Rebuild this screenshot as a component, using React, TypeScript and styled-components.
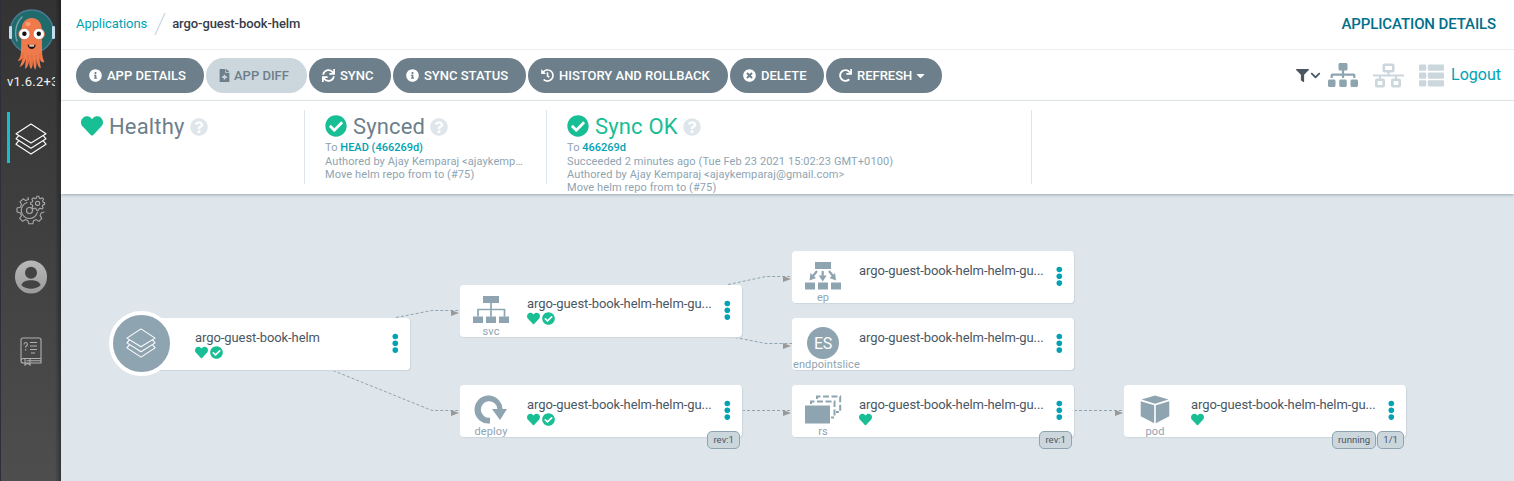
import React from 'react';
import styled, { createGlobalStyle } from 'styled-components';
import {
  FaInfoCircle, FaFileMedical, FaSync, FaHistory, FaTimesCircle, FaRedo, FaCaretDown,
  FaHeart, FaCheckCircle, FaQuestionCircle, FaFilter, FaChevronDown, FaSitemap, FaThList,
} from 'react-icons/fa';

const Global = createGlobalStyle`
  * { box-sizing: border-box; }
  body { margin: 0; font-family: Roboto, "Liberation Sans", sans-serif; background: #dee6eb; overflow: hidden; }
  svg { display: block; flex: none; }
`;

const Page = styled.div`
  display: flex;
  width: 1514px;
  height: 481px;
  overflow: hidden;
`;

/* ---------- sidebar ---------- */
const Sidebar = styled.nav`
  width: 61px;
  flex: none;
  display: flex;
  flex-direction: column;
  border-left: 1px solid #2e2e38;
  background: linear-gradient(to right, transparent 54px, rgba(0, 0, 0, 0.34) 60px),
    linear-gradient(#333 0, #3c3c3c 35%, #4e4e4e 100%);
`;
const Logo = styled.div`
  padding: 8px 0 0 7px;
  height: 73px;
`;
const Version = styled.div`
  margin-left: 6px;
  width: 48px;
  height: 20px;
  font-size: 13px;
  line-height: 18px;
  letter-spacing: 0.25px;
  color: #f1f1f1;
  white-space: nowrap;
  overflow: hidden;
`;
const NavItem = styled.a<{ $active?: boolean; $gap: number }>`
  display: flex;
  align-items: center;
  justify-content: center;
  height: 51px;
  margin: ${p => p.$gap}px 6px 0;
  padding: 2px 3px 0 0;
  border-left: 3px solid ${p => (p.$active ? '#18becf' : 'transparent')};
`;

/* ---------- header ---------- */
const Main = styled.div`
  flex: 1;
  display: flex;
  flex-direction: column;
  min-width: 0;
`;
const Header = styled.header`
  display: flex;
  align-items: center;
  height: 50px;
  padding: 0 18px 2px 15px;
  background: #fff;
  border-bottom: 1px solid #e9eef1;
  font-size: 13px;
`;
const Crumb = styled.a`
  color: #00a2b3;
  letter-spacing: -0.07px;
`;
const Slash = styled.svg`
  margin: 0 6px 0 7px;
`;
const Current = styled.span`
  flex: 1;
  font-weight: 500;
  letter-spacing: -0.08px;
  color: #363c4a;
`;
const PageTitle = styled.div`
  font-size: 15px;
  letter-spacing: -0.11px;
  font-weight: 500;
  padding-top: 1px;
  color: #006f8a;
`;

/* ---------- toolbar ---------- */
const Toolbar = styled.div`
  display: flex;
  align-items: center;
  height: 51px;
  padding: 0 13px 0 15px;
  gap: 2px;
  background: #fff;
  border-bottom: 1px solid #ebeff2;
`;
const Action = styled.button<{ $w: number; $disabled?: boolean }>`
  display: flex;
  align-items: center;
  gap: 5px;
  width: ${p => p.$w}px;
  height: 35px;
  padding: 0 0 0 13px;
  border: 0;
  border-radius: 18px;
  font: 500 13px Roboto, sans-serif;
  white-space: nowrap;
  color: ${p => (p.$disabled ? '#6d7f8b' : '#fff')};
  background: ${p => (p.$disabled ? '#ccd6dd' : '#6d7f8b')};
`;
const DiffIcon = styled(FaFileMedical)`
  margin: 0 -2px 0 -1px;
`;
const Caret = styled(FaCaretDown)`
  margin-left: -3px;
`;
const Views = styled.div`
  display: flex;
  align-items: center;
  margin-left: auto;
`;
const FilterIcons = styled.div`
  display: flex;
  align-items: center;
  gap: 1px;
  color: #495763;
  margin-right: 7px;
`;
const ViewModes = styled.div`
  display: flex;
  align-items: center;
  gap: 15px;
`;
const Logout = styled.a`
  margin-left: 7px;
  padding-bottom: 2px;
  font-size: 16px;
  color: #00a2b3;
`;

/* ---------- status ---------- */
const Status = styled.section`
  display: flex;
  height: 93px;
  padding: 9px 0 0 20px;
  background: #fff;
  position: relative;
  z-index: 1;
  box-shadow: 0 1px 3px rgba(70, 95, 110, 0.45);
`;
const StatusItem = styled.div<{ $w: number }>`
  width: ${p => p.$w}px;
  height: 74px;
  border-right: 1px solid #dee6eb;
  margin-right: 20px;
  padding-right: 20px;
`;
const StatusHead = styled.div<{ $green?: boolean }>`
  display: flex;
  align-items: center;
  height: 31px;
  font-size: 22px;
  letter-spacing: 0.16px;
  color: ${p => (p.$green ? '#18be94' : '#6d7f8b')};
`;
const StatusText = styled.span`
  margin: 1px 5px 0 6px;
  padding-top: 1px;
  line-height: 31px;
`;
const HelpIcon = styled(FaQuestionCircle)`
  margin-top: 3px;
`;
const Line = styled.div<{ $h?: number }>`
  font-size: 11px;
  letter-spacing: 0.1px;
  height: ${p => p.$h ?? 13}px;
  line-height: 13px;
  color: #8fa4b1;
  white-space: nowrap;
`;
const Revision = styled.a`
  font-weight: 500;
  letter-spacing: 0;
  color: #00a2b3;
`;

/* ---------- resource tree ---------- */
const Canvas = styled.main`
  position: relative;
  flex: 1;
  background: #dee6eb;
`;
const Edges = styled.svg`
  position: absolute;
  left: 0;
  top: 0;
`;
const NodeCard = styled.div<{ $x: number; $y: number }>`
  position: absolute;
  left: ${p => p.$x - 61}px;
  top: ${p => p.$y - 194}px;
  width: 282px;
  height: 52px;
  display: flex;
  background: #fff;
  border-radius: 4px;
  box-shadow: 1px 1px 1px #ccd6dd;
`;
const Kind = styled.div`
  width: 62px;
  margin-right: 5px;
  display: flex;
  flex-direction: column;
  align-items: center;
  padding-top: 9px;
`;
const KindLabel = styled.div`
  max-width: 60px;
  font-size: 11px;
  line-height: 12px;
  letter-spacing: 0.1px;
  white-space: nowrap;
  color: #8fa4b1;
`;
const RootKind = styled.div`
  width: 65px;
  height: 65px;
  margin: -7px 21px 0 -19px;
  flex: none;
  border: 4px solid #fff;
  border-radius: 50%;
  background: #8fa4b1;
  display: flex;
  align-items: center;
  justify-content: center;
  padding: 0 1px 1px 0;
`;
const NodeBody = styled.div<{ $raised?: boolean }>`
  width: 188px;
  padding-top: ${p => (p.$raised ? 10 : 11)}px;
`;
const NodeName = styled.div`
  font-size: 13px;
  line-height: 17px;
  letter-spacing: -0.08px;
  color: #495763;
  white-space: nowrap;
`;
const Badges = styled.div`
  display: flex;
  gap: 2px;
  color: #18be94;
`;
const Dots = styled.svg`
  position: absolute;
  right: 11px;
  top: 15px;
`;
const Tags = styled.div`
  position: absolute;
  right: 2px;
  bottom: -12px;
  display: flex;
  gap: 1px;
`;
const Tag = styled.span`
  height: 18px;
  padding: 0 5px;
  border: 1px solid #8fa4b1;
  border-radius: 5px;
  background: #ccd6dd;
  color: #495763;
  font-size: 9.6px;
  line-height: 16px;
`;

const LayersIcon = ({ size, stroke = '#fff' }: { size: number; stroke?: string }) => (
  <svg width={size} height={size} viewBox="0 0 32 32" fill="none" stroke={stroke} strokeWidth="1.1" strokeLinejoin="round">
    <path d="M16 1 31 10.8 16 20 1 10.8Z" />
    <path d="M3.7 12.6 1 15.8 16 25.3 31 15.8 28.3 12.6" />
    <path d="M3.7 17.8 1 21.2 16 31 31 21.2 28.3 17.8" />
  </svg>
);

const Mascot = () => (
  <svg width="47" height="63" viewBox="8 8 47 63">
    <circle cx="31.7" cy="31.5" r="21.500" fill="#216a6c" stroke="#477d96" strokeWidth="1.3" />
    <path d="M17 41c-3-8-1-18 5-24" fill="none" stroke="#73a4a8" strokeWidth="1.4" strokeLinecap="round" />
    <rect x="9" y="26" width="3" height="13" rx="1.2" fill="#c5dcef" />
    <rect x="52" y="26" width="3" height="13" rx="1.2" fill="#c5dcef" />
    <path d="M21.5 31c0-8 4-13 10.3-13S42 23 42 31v19c0 7 1.5 10 2.5 12-3 1-4-1-5-4 0 4 1 8 1.5 10-3 0-4-5-4.5-9 0 4 0 8-1 10.500-2-1-2-6-2.400-9.500 0 3-.6 7-2 9-2-2-2-6-1.800-9.500-.4 4-1.600 8-4.200 9.500 0-4 .8-7 .7-10.500-1 4-3 7.500-6.300 8.500 1.400-3 2.600-6 3-9-1.300 2-3 3.200-4.800 3 2.500-3 3.500-6 3.300-11Z" fill="#ef7b4d" />
    <path d="M23 53v7M28 55v9M32 55v11M36 55v9M40 53v8" stroke="#d55e35" strokeWidth=".7" />
    <ellipse cx="28" cy="24" rx="2.6" ry="2" fill="#fa9f78" />
    <circle cx="24.4" cy="34" r="5.700" fill="#fff" stroke="#e35f3a" strokeWidth=".8" />
    <circle cx="38.800" cy="34" r="5.700" fill="#fff" stroke="#e35f3a" strokeWidth=".8" />
    <circle cx="24.4" cy="33.800" r="2.200" fill="#111" />
    <circle cx="38.800" cy="33.800" r="2.200" fill="#111" />
    <path d="M27.500 44.500c2.500 1 6 1 8.300 0-.7 6-7.400 6-8.300 0Z" fill="#201512" />
    <path d="M29.300 45.200h4.800v1.300h-4.800Z" fill="#fff" />
  </svg>
);

const GearsIcon = () => (
  <svg width="30" height="30" viewBox="1 0 30 30" fill="none" stroke="#a9a9a9" strokeWidth="1.1" strokeLinejoin="round" strokeLinecap="round">
    <path d="M13.500 4.500 13 2.500M13.500 4.500 10.500 5.600 8.300 3.800 5 6.800 6.600 9.500 5.300 12.300 2 13v4l3.200.7 1.300 3-1.800 2.600 3 3 2.700-1.700 2.600 1.200.8 3h4l.7-3 2.800-1.200 2.600 1.800 2.900-3-1.700-2.800 1.100-2.600 2.800-1" />
    <path d="M12 7.500a8.200 8.200 0 1 0 10.500 9.500" />
    <circle cx="14.500" cy="15.500" r="3" />
    <path d="m21.300 3.200.5-2h2l.5 2 1.300.6 1.700-1 1.300 1.400-1 1.600.5 1.400 1.500.4v1.800l-1.700.5-.6 1.300.9 1.600-1.400 1.300-1.600-.9-1.200.5-.5 1.600h-1.900l-.5-1.700-1.300-.5-1.500.9-1.400-1.400.9-1.500-.5-1.300-1.700-.5v-1.800l1.700-.5.5-1.300-.9-1.500L18.300 2.800l1.700.9Z" />
    <circle cx="22.600" cy="8.300" r="2.100" />
  </svg>
);

const UserIcon = () => (
  <svg width="32" height="34" viewBox="0 0 32 34">
    <defs>
      <linearGradient id="userFill" x1="0" y1="0" x2="0" y2="1">
        <stop offset="0" stopColor="#b9b9b9" /><stop offset="1" stopColor="#9b9b9b" />
      </linearGradient>
    </defs>
    <ellipse cx="16" cy="17" rx="16" ry="16.500" fill="url(#userFill)" />
    <circle cx="16" cy="12.800" r="6" fill="#434343" />
    <path d="M6.300 25c2-4 5.200-4.800 9.700-4.800s7.700.8 9.700 4.800c-4.800 5-14.600 5-19.400 0Z" fill="#434343" />
  </svg>
);

const DocsIcon = () => (
  <svg width="22" height="29" viewBox="0 0 22 29" fill="none" stroke="#b0b0b0" strokeWidth="1.1">
    <path d="M1 24V3Q1 1 3 1h16q2 0 2 2v18.500H3.500Q1 21.500 1 24q0 2 2.500 2H21v-4.500M6.500 23.700H21" />
    <path d="M5 21.500V28l2.500-1.600L10 28v-6.500" />
    <path d="M4 7.500Q4 5.500 5.700 5.500T7.400 7.500Q7.400 8.800 5.700 9.500V10.500M5.700 12v1.400M10 5.500h7M10 9h7M10 12.500h7M11 16h4" />
  </svg>
);

const NetworkIcon = () => (
  <svg width="31" height="25" viewBox="0 0 31 25" fill="none" stroke="#ccd6dd">
    <g strokeWidth="2.600">
      <rect x="10.800" y="1.800" width="9.400" height="6.400" rx=".8" />
      <rect x="3.300" y="16.800" width="7.400" height="6.400" rx=".8" />
      <rect x="19.300" y="16.800" width="7.400" height="6.400" rx=".8" />
    </g>
    <path d="M0 12.500h31M15.500 9v3.500M7 12.500V16M23 12.500V16" strokeWidth="2" />
  </svg>
);

const KIND_COLOR = '#8fa4b1';
const kindArt: Record<string, React.ReactNode> = {
  svc: (
    <g>
      <path d="M12 2h16v7H12ZM2 22.500h10V29H2ZM15 22.500h10V29H15ZM28 22.500h10V29H28Z" />
      <path d="M20 9v13.500M7 22.500V15.500H33.500V22.500" fill="none" stroke={KIND_COLOR} strokeWidth="1.700" />
    </g>
  ),
  ep: (
    <g>
      <path d="M12 2h16v7H12ZM2 22.500h10V29.500H2ZM15 22.500h10V29.500H15ZM28 22.500h10V29.500H28Z" />
      <path d="M14 11 10 16M19.700 11v6M26 11l4 5" fill="none" stroke={KIND_COLOR} strokeWidth="2.200" />
      <path d="m6.500 20.500 1-7.500 5.500 5ZM15.700 15.500h8L19.700 21.500ZM33 20.500l-1-7.500-5.500 5Z" />
    </g>
  ),
  deploy: (
    <path d="M19 29.500A14 14 0 1 1 31.500 15H36L29 26 21 15H26.400A8.300 8.300 0 1 0 19 23.800Z" />
  ),
  rs: (
    <g>
      <path d="M2 11.500h25V29.500H2Z" />
      <path d="M8 10V7.500h23.500v16H28" fill="none" stroke={KIND_COLOR} strokeWidth="2" strokeDasharray="6 2.500" />
      <path d="M14 5V2.500h23.200V18H33" fill="none" stroke={KIND_COLOR} strokeWidth="2" strokeDasharray="6 2.500" />
    </g>
  ),
  pod: (
    <path d="M20 1.500 33.500 5.600 20 9.800 6.500 5.600ZM5.700 7.200 19.200 11.300V29.300L5.700 22.300ZM34.300 7.200 20.800 11.300V29.300L34.300 22.300Z" />
  ),
  endpointslice: (
    <g>
      <circle cx="20" cy="16" r="16" />
      <text x="20" y="21.500" textAnchor="middle" fill="#fff" fontSize="16" letterSpacing="-.2">ES</text>
    </g>
  ),
};

const MoreDots = () => (
  <Dots width="7" height="20" viewBox="0 0 7 20" fill="#00a2b3">
    <circle cx="3.300" cy="3.500" r="2.800" /><circle cx="3.300" cy="10.300" r="2.800" /><circle cx="3.300" cy="17.100" r="2.800" />
  </Dots>
);

type NodeProps = { x: number; y: number; kind?: string; healthy?: boolean; synced?: boolean; tags?: string[] };

const ResourceNode = ({ x, y, kind, healthy, synced, tags }: NodeProps) => (
  <NodeCard $x={x} $y={y}>
    {kind ? (
      <Kind>
        <svg width="40" height="32" viewBox="0 0 40 32" fill={KIND_COLOR} overflow="visible">{kindArt[kind]}</svg>
        <KindLabel>{kind}</KindLabel>
      </Kind>
    ) : (
      <RootKind><LayersIcon size={30} /></RootKind>
    )}
    <NodeBody $raised={kind === 'svc'}>
      <NodeName>{kind ? 'argo-guest-book-helm-helm-gu...' : 'argo-guest-book-helm'}</NodeName>
      <Badges>
        {healthy && <FaHeart size={13} />}
        {synced && <FaCheckCircle size={13} />}
      </Badges>
    </NodeBody>
    <MoreDots />
    {tags && <Tags>{tags.map(t => <Tag key={t}>{t}</Tag>)}</Tags>}
  </NodeCard>
);

const nodes: NodeProps[] = [
  { x: 128, y: 318, healthy: true, synced: true },
  { x: 460, y: 285, kind: 'svc', healthy: true, synced: true },
  { x: 460, y: 385, kind: 'deploy', healthy: true, synced: true, tags: ['rev:1'] },
  { x: 792, y: 251, kind: 'ep' },
  { x: 792, y: 318, kind: 'endpointslice' },
  { x: 792, y: 385, kind: 'rs', healthy: true, tags: ['rev:1'] },
  { x: 1124, y: 385, kind: 'pod', healthy: true, tags: ['running', '1/1'] },
];
const arrows = [[451, 313], [451, 413], [783, 279], [783, 346], [783, 413], [1115, 413]];

const Help = () => <HelpIcon size={18} color="#dee6eb" />;

export default function App() {
  return (
    <Page>
      <Global />
      <Sidebar>
        <Logo><Mascot /></Logo>
        <Version>v1.6.2+3</Version>
        <NavItem $active $gap={19}><LayersIcon size={32} /></NavItem>
        <NavItem $gap={20}><GearsIcon /></NavItem>
        <NavItem $gap={16}><UserIcon /></NavItem>
        <NavItem $gap={24}><DocsIcon /></NavItem>
      </Sidebar>
      <Main>
        <Header>
          <Crumb>Applications</Crumb>
          <Slash width="12" height="24" viewBox="0 0 12 24"><path d="M1 23 11 1" stroke="#ccd6dd" strokeWidth="1.200" /></Slash>
          <Current>argo-guest-book-helm</Current>
          <PageTitle>APPLICATION DETAILS</PageTitle>
        </Header>
        <Toolbar>
          <Action $w={128}><FaInfoCircle size={13} />APP DETAILS</Action>
          <Action $w={101} $disabled><DiffIcon size={13} />APP DIFF</Action>
          <Action $w={82}><FaSync size={13} />SYNC</Action>
          <Action $w={133}><FaInfoCircle size={13} />SYNC STATUS</Action>
          <Action $w={200}><FaHistory size={13} />HISTORY AND ROLLBACK</Action>
          <Action $w={94}><FaTimesCircle size={13} />DELETE</Action>
          <Action $w={116}><FaRedo size={13} />REFRESH<Caret size={13} /></Action>
          <Views>
            <FilterIcons><FaFilter size={13} /><FaChevronDown size={11} /></FilterIcons>
            <ViewModes>
              <FaSitemap size={30} color="#8fa4b1" />
              <NetworkIcon />
              <FaThList size={25} color="#ccd6dd" />
            </ViewModes>
            <Logout>Logout</Logout>
          </Views>
        </Toolbar>
        <Status>
          <StatusItem $w={224}>
            <StatusHead><FaHeart size={22} color="#18be94" /><StatusText>Healthy</StatusText><Help /></StatusHead>
          </StatusItem>
          <StatusItem $w={222}>
            <StatusHead><FaCheckCircle size={22} color="#18be94" /><StatusText>Synced</StatusText><Help /></StatusHead>
            <Line $h={14}>To <Revision>HEAD (466269d)</Revision></Line>
            <Line>Authored by Ajay Kemparaj &lt;ajaykemp…</Line>
            <Line>Move helm repo from to (#75)</Line>
          </StatusItem>
          <StatusItem $w={465}>
            <StatusHead $green><FaCheckCircle size={22} /><StatusText>Sync OK</StatusText><Help /></StatusHead>
            <Line $h={14}>To <Revision>466269d</Revision></Line>
            <Line>Succeeded 2 minutes ago (Tue Feb 23 2021 15:02:23 GMT+0100)</Line>
            <Line>Authored by Ajay Kemparaj &lt;ajaykemparaj@gmail.com&gt;</Line>
            <Line>Move helm repo from to (#75)</Line>
          </StatusItem>
        </Status>
        <Canvas>
          <Edges width="1453" height="287" viewBox="61 194 1453 287">
            <g fill="none" stroke="#8fa4b1" strokeDasharray="3 2">
              <path d="M396 317.500 432 310.500H460" />
              <path d="M333 370.500 432 410.500H460" />
              <path d="M728 284.500 766 276.500H792" />
              <path d="M735 337.500 766 343.500H792" />
              <path d="M742 410.500H792M1074 410.500H1124" />
            </g>
            {arrows.map(([x, y]) => (
              <path key={`${x}-${y}`} d={`M${x} ${y - 3}l8 3-8 3Z`} fill="#999" />
            ))}
          </Edges>
          {nodes.map(n => <ResourceNode key={`${n.x}-${n.y}`} {...n} />)}
        </Canvas>
      </Main>
    </Page>
  );
}
